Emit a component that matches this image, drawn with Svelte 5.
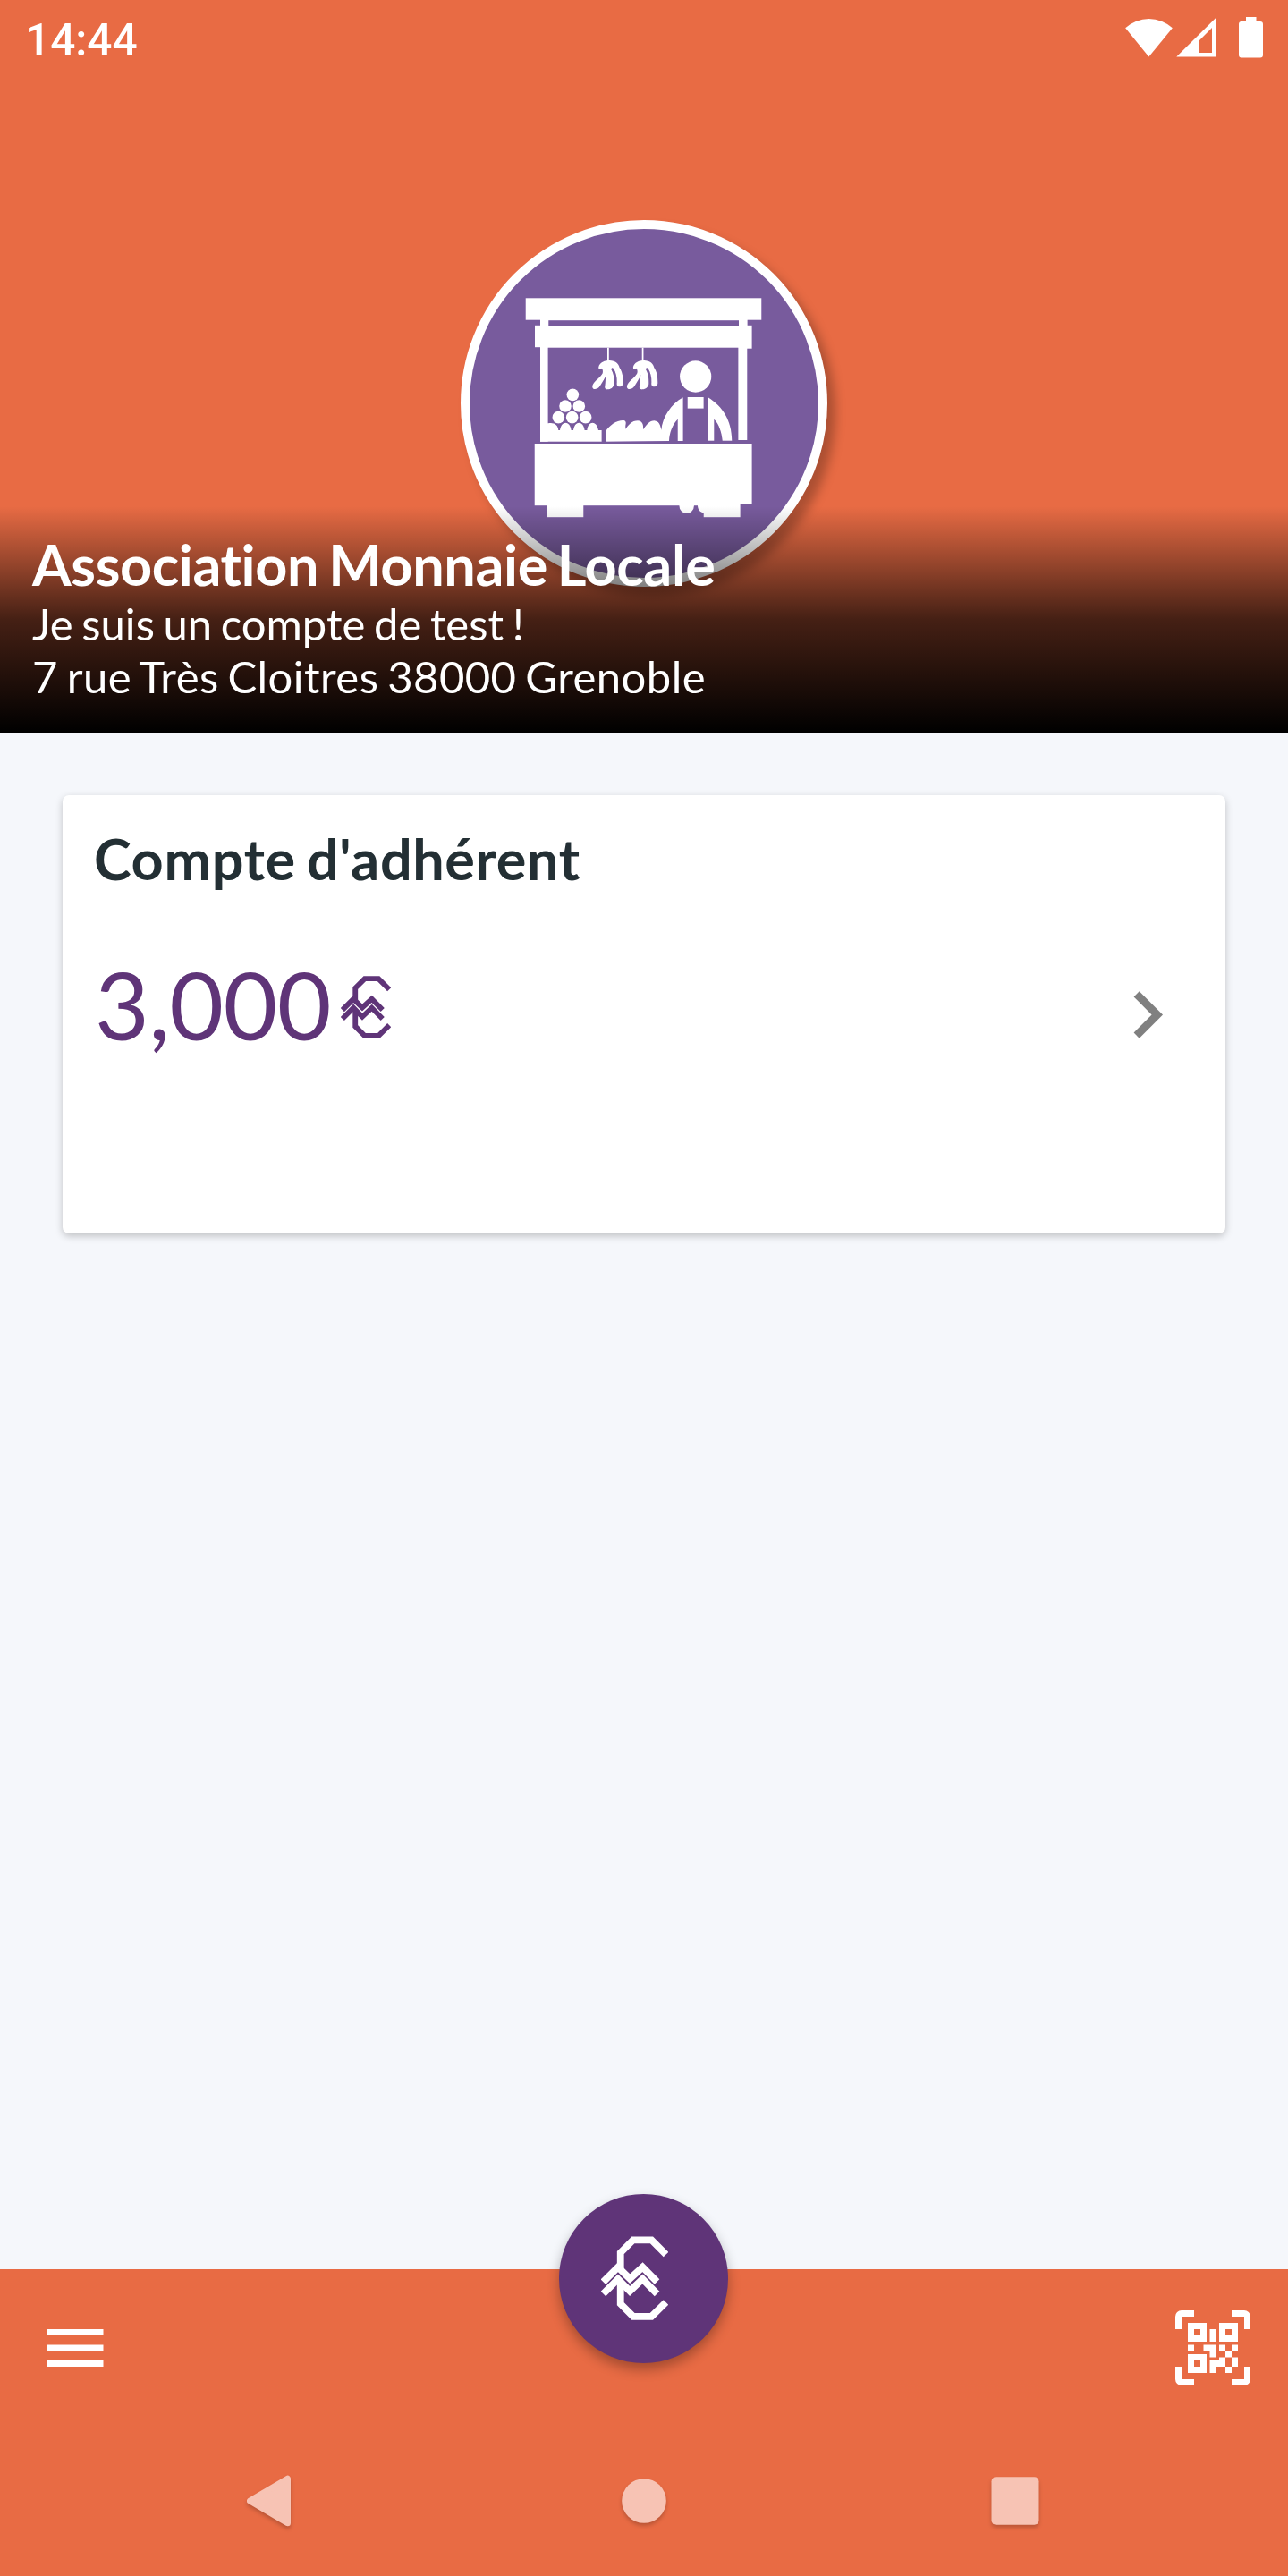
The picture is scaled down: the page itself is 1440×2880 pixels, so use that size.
<script>
  const account = {
    name: 'Association Monnaie Locale',
    description: 'Je suis un compte de test !',
    address: '7 rue Très Cloitres 38000 Grenoble'
  };
  const card = { title: "Compte d'adhérent", balance: '3,000' };
  const bananaOffsets = [0, 116];
  const fruits = [
    [181, 364],
    [156, 402],
    [202, 402],
    [133, 440],
    [179, 440],
    [224, 440]
  ];
</script>

{#snippet currency()}
  <svg class="currency" viewBox="217 207 226 281" fill="none" stroke="currentColor" stroke-width="23.5">
    <path d="M435.5 268 387 219H325L282.5 262V316" />
    <path d="M282.5 362V434L325 476.5H387L435.5 429" />
    <path d="M224.5 360 274 310.5 314 349.5 357 310.5 405.5 359.5" />
    <path d="M224.5 400 274 350.5 314 391 357 350.5 405.5 400" />
  </svg>
{/snippet}

<div class="screen">
  <header class="hero">
    <div class="status">
      <span class="clock">14:44</span>
      <svg class="status-icons" viewBox="1258 19 154 46" fill="#fff">
        <path d="M1284.4 63.4 1258.2 31.2A39 39 0 0 1 1310.8 31.2Z" />
        <path fill-rule="evenodd" d="M1315.3 63.5 1360 19.3V63.5ZM1340 59H1355V31L1340 46Z" />
        <path d="M1393 19H1404.5V24H1409A3 3 0 0 1 1412 27V61.5A3 3 0 0 1 1409 64.5H1388A3 3 0 0 1 1385 61.5V27A3 3 0 0 1 1388 24H1393Z" />
      </svg>
    </div>

    <div class="logo">
      <svg class="stall" viewBox="0 0 1170 1170" fill="#fff">
        <g transform="translate(165 192)">
          <!-- roof, posts and counter -->
          <path d="M23 40H814V113H767V131H782V209H766V516H736V206H98V521H72V205H54V131H72V113H23ZM100 115V133H738V115Z" fill-rule="evenodd" />
          <path d="M53 528H782V731H743V775H620V761C606 757 600 748 600 736H588A25 26 0 0 1 538 736H217V775H94V736H53Z" />
          <!-- hanging bananas -->
          {#each bananaOffsets as dx}
            <g transform="translate({dx} 0)">
              <path d="M297 206H302.500V252H297Z" />
              <path d="M268 277C265 262 283 248 302 249C325 248 335 260 338 273C346 285 350 300 350 322C351 332 345 337 338 337C329 337 328 330 329 322C330 305 325 288 318 277C314 271 309 274 311 281C317 291 321 305 320 328C319 338 310 346 299 346C290 347 287 342 289 334C291 322 290 310 293 297C289 310 280 322 272 335C266 345 256 346 250 344C245 340 246 333 250 327C258 315 275 305 281 292C283 285 281 280 279 275C276 279 271 279 268 277Z" />
            </g>
          {/each}
          <!-- fruit crate -->
          {#each fruits as [cx, cy]}
            <circle {cx} {cy} r="20.500" />
          {/each}
          <path d="M72 521V460H98C118 455 132 465 133 483H138C142 450 172 450 176 483H183C187 450 217 450 221 483H229C232 450 262 450 267 483H278V521Z" />
          <!-- loaves and seller -->
          <path d="M291 521V487C305 465 330 448 352 450C361 452 360 460 358 468V479C368 465 380 450 400 451C415 452 419 465 417 481C428 465 440 450 455 451C470 453 475 465 478 482C482 440 510 395 551 373V519H533V446C515 465 506 490 504 519Z" />
          <path d="M635 373C685 405 714 450 715 518H683C680 490 672 463 655 446V518H635Z" />
          <rect x="566" y="372" width="54" height="38" />
          <circle cx="593" cy="303" r="53" />
        </g>
      </svg>
    </div>

    <div class="identity">
      <h1>{account.name}</h1>
      <p class="description">{account.description}</p>
      <p class="address">{account.address}</p>
    </div>
  </header>

  <main>
    <section class="card">
      <h2>{card.title}</h2>
      <div class="balance"><span>{card.balance}</span>{@render currency()}</div>
      <svg class="chevron" viewBox="0 0 24 24" fill="#808080">
        <path d="M8.590 16.580 13.170 12 8.590 7.410 10 6 16 12 10 18Z" />
      </svg>
    </section>
  </main>

  <footer>
    <div class="tabs">
      <svg class="tab-icon" viewBox="0 0 24 24" fill="#fff">
        <path d="M3 6H21V8H3ZM3 11H21V13H3ZM3 16H21V18H3Z" />
      </svg>
      <button class="pay" aria-label="Payer">{@render currency()}</button>
      <svg class="tab-icon" viewBox="0 0 24 24" fill="#fff">
        <path d="M4,4H10V10H4V4M20,4V10H14V4H20M14,15H16V13H14V11H16V13H18V11H20V13H18V15H20V18H18V20H16V18H13V20H11V16H14V15M16,15V18H18V15H16M4,20V14H10V20H4M6,6V8H8V6H6M16,6V8H18V6H16M6,16V18H8V16H6M4,11H6V13H4V11M9,11H13V15H11V13H9V11M11,6H13V10H11V6M2,2V6H0V2A2,2 0 0,1 2,0H6V2H2M22,0A2,2 0 0,1 24,2V6H22V2H18V0H22M2,18V22H6V24H2A2,2 0 0,1 0,22V18H2M22,22V18H24V22A2,2 0 0,1 22,24H18V22H22Z" />
      </svg>
    </div>
    <div class="system-nav">
      <svg class="nav-icon" viewBox="0 0 60 60">
        <path d="M4.500 30 46.500 5.200V54.800Z" stroke-width="7" stroke-linejoin="round" />
      </svg>
      <svg class="nav-icon" viewBox="0 0 60 60"><circle cx="30" cy="30" r="24.800" /></svg>
      <svg class="nav-icon" viewBox="0 0 60 60"><rect x="3.500" y="3.200" width="53" height="53.500" rx="5" /></svg>
    </div>
  </footer>
</div>

<style>
  :global(body) {
    margin: 0;
  }

  .screen {
    display: flex;
    flex-direction: column;
    width: 1440px;
    height: 2880px;
    overflow: hidden;
    background: #f5f7fb;
    font-family: Lato, sans-serif;
    font-variant-ligatures: none;
  }

  h1,
  h2,
  p {
    margin: 0;
    font-size: 49px;
    font-weight: 400;
    line-height: 58.8px;
  }

  svg {
    display: block;
    flex: none;
  }

  .hero {
    position: relative;
    display: flex;
    flex-direction: column;
    align-items: center;
    height: 819px;
    background: #e86b44;
    color: #fff;
  }

  .status {
    display: flex;
    align-self: stretch;
    align-items: center;
    justify-content: space-between;
    height: 84px;
    padding: 0 28px;
  }

  .clock {
    padding-top: 6px;
    font: 500 49.5px/56px Roboto, sans-serif;
  }

  .status-icons {
    width: 154px;
    height: 46px;
  }

  .logo {
    display: flex;
    margin-top: 162px;
    border: 10px solid #fff;
    border-radius: 50%;
    background: #785b9d;
    box-shadow: 9px 10px 12px rgba(0, 0, 0, 0.26);
  }

  .stall {
    width: 390px;
    height: 390px;
  }

  .stall > g {
    filter: drop-shadow(0 0 2px #5c2d90);
  }

  .identity {
    position: absolute;
    inset: auto 0 0;
    padding: 28px 36px 33px;
    background: linear-gradient(rgba(0, 0, 0, 0), rgba(0, 0, 0, 0.7), #000);
  }

  .identity h1 {
    font-size: 63px;
    font-weight: 700;
    letter-spacing: -0.38px;
    line-height: 74px;
    word-spacing: -4px;
  }

  .description {
    word-spacing: -2.9px;
  }

  .address {
    letter-spacing: 0.45px;
    word-spacing: -3.2px;
  }

  main {
    flex: 1;
    padding: 70px;
  }

  .card {
    display: grid;
    grid-template-columns: 1fr 105px;
    grid-template-rows: 76px 1fr;
    box-sizing: border-box;
    height: 490px;
    padding: 33px 35px;
    border-radius: 7px;
    background: #fff;
    box-shadow: 0 3px 9px rgba(0, 0, 0, 0.22);
  }

  .card h2 {
    color: #232f34;
    font-size: 63px;
    font-weight: 700;
    letter-spacing: 0.6px;
    line-height: 76px;
    word-spacing: -3.7px;
  }

  .balance {
    display: flex;
    grid-row: 2;
    align-items: flex-start;
    padding: 61px 0 0 1px;
    color: #5f3478;
    font-size: 105px;
    letter-spacing: -0.7px;
    line-height: 126px;
  }

  .balance .currency {
    width: 56px;
    height: 70px;
    margin: 32px 0 0 11px;
  }

  .chevron {
    grid-area: 1 / 2 / 3 / 3;
    align-self: center;
    width: 105px;
    height: 105px;
  }

  footer {
    height: 343px;
    background: #e86b44;
  }

  .tabs {
    display: flex;
    align-items: center;
    justify-content: space-between;
    height: 175px;
    padding: 0 42px;
  }

  .tab-icon {
    width: 84px;
    height: 84px;
  }

  .pay {
    display: flex;
    align-items: center;
    box-sizing: border-box;
    width: 189px;
    height: 189px;
    margin: 0 1px 155px 0;
    padding: 0 0 0 47px;
    border: 0;
    border-radius: 50%;
    background: #5f3478;
    color: #fff;
    box-shadow: 0 7px 14px rgba(0, 0, 0, 0.3);
  }

  .pay .currency {
    width: 75px;
    height: 94px;
  }

  .system-nav {
    display: flex;
    align-items: center;
    justify-content: space-between;
    height: 168px;
    padding: 0 275px;
  }

  .nav-icon {
    width: 60px;
    height: 60px;
    fill: #f7c3b4;
    stroke: #f7c3b4;
    stroke-width: 0;
    overflow: visible;
    filter: drop-shadow(0 3px 2px rgba(0, 0, 0, 0.2));
  }
</style>
